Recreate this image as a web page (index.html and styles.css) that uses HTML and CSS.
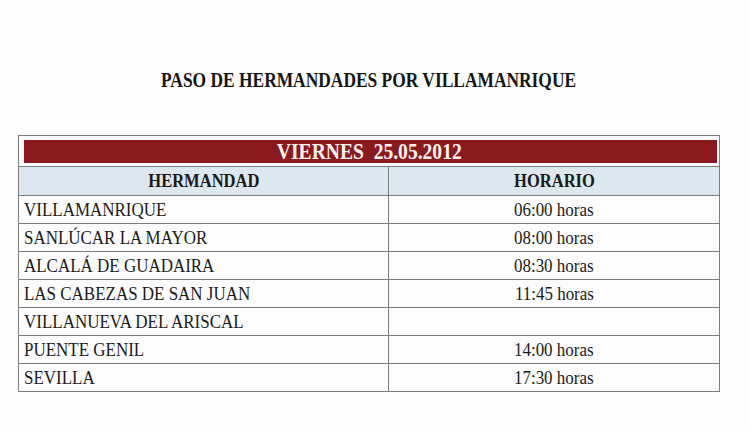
FILE: index.html
```html
<!DOCTYPE html>
<html lang="es">
<head>
<meta charset="utf-8">
<title>Paso de Hermandades por Villamanrique</title>
<link rel="stylesheet" href="styles.css">
</head>
<body>
<div class="sheet">
  <h1 class="title"><span class="sq">PASO DE HERMANDADES POR VILLAMANRIQUE</span></h1>
  <div class="table">
    <div class="band-wrap"><div class="band"><span class="sq">VIERNES&nbsp;&nbsp;25.05.2012</span></div></div>
    <div class="row head">
      <div class="cell name"><span class="sq">HERMANDAD</span></div>
      <div class="cell time"><span class="sq">HORARIO</span></div>
    </div>
    <div class="row"><div class="cell name"><span class="sq">VILLAMANRIQUE</span></div><div class="cell time"><span class="sq">06:00 horas</span></div></div>
    <div class="row"><div class="cell name"><span class="sq">SANLÚCAR LA MAYOR</span></div><div class="cell time"><span class="sq">08:00 horas</span></div></div>
    <div class="row"><div class="cell name"><span class="sq">ALCALÁ DE GUADAIRA</span></div><div class="cell time"><span class="sq">08:30 horas</span></div></div>
    <div class="row"><div class="cell name"><span class="sq">LAS CABEZAS DE SAN JUAN</span></div><div class="cell time"><span class="sq">11:45 horas</span></div></div>
    <div class="row"><div class="cell name"><span class="sq">VILLANUEVA DEL ARISCAL</span></div><div class="cell time"></div></div>
    <div class="row"><div class="cell name"><span class="sq">PUENTE GENIL</span></div><div class="cell time"><span class="sq">14:00 horas</span></div></div>
    <div class="row"><div class="cell name"><span class="sq">SEVILLA</span></div><div class="cell time"><span class="sq">17:30 horas</span></div></div>
  </div>
</div>
</body>
</html>
```
FILE: styles.css
```css
html, body {
  margin: 0;
  padding: 0;
  background: #fdfdfd;
}
body {
  font-family: "Liberation Serif", "Times New Roman", serif;
  color: #1a1a1a;
}
.sq {
  display: inline-block;
  white-space: nowrap;
  transform: scaleX(0.87);
  transform-origin: center;
}
.sheet {
  margin-left: 18px;
  width: 702px;
}
.title {
  margin: 69px 0 0 0;
  font-size: 20px;
  line-height: 22px;
  font-weight: bold;
  text-align: center;
  color: #151515;
}
.table {
  margin-top: 44px;
  border: 1px solid #7d7d7d;
}
.band-wrap {
  padding: 4px 2px 3px 5px;
}
.band {
  height: 23px;
  background: #8b1a1f;
  color: #fbf3f0;
  font-size: 22.5px;
  font-weight: bold;
  line-height: 24px;
  text-align: center;
  padding-right: 3px;
}
.row {
  display: grid;
  grid-template-columns: 370px 1fr;
  border-top: 1px solid #7d7d7d;
  height: 27px;
}
.row.head {
  height: 28px;
  background: #dde8ee;
}
.cell {
  display: flex;
  align-items: center;
  font-size: 19.5px;
}
.cell.name {
  padding-left: 5px;
  border-right: 1px solid #7d7d7d;
}
.cell.name .sq {
  transform-origin: left center;
}
.cell.time {
  justify-content: center;
  font-size: 19.5px;
}
.head .cell {
  font-weight: bold;
  justify-content: center;
  padding-left: 0;
  font-size: 19px;
}
.head .cell.name .sq {
  transform-origin: center;
}
```
